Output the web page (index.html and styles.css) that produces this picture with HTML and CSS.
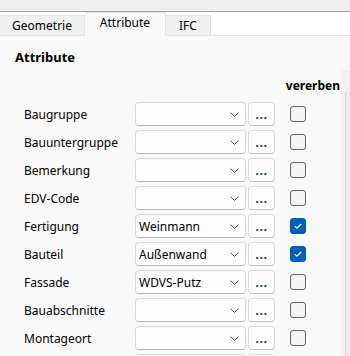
FILE: index.html
```html
<!DOCTYPE html>
<html>
<head>
<meta charset="utf-8">
<link rel="stylesheet" href="styles.css">
</head>
<body>
<div class="topbar"></div>
<div class="tabbar">
  <div class="tab">Geometrie</div>
  <div class="tab active">Attribute</div>
  <div class="tab">IFC</div>
</div>
<div class="content">
  <div class="main">
    <div class="heading">Attribute</div>
    <div class="colhead">vererben</div>
    <div class="rows">
      <div class="row"><span class="label">Baugruppe</span><div class="combo"><span class="val"></span><svg class="chev" width="9" height="5" viewBox="0 0 9 5"><path d="M0.5 0.5 L4.5 4.5 L8.5 0.5" fill="none" stroke="#5a5a5a" stroke-width="1"/></svg></div><div class="btn">...</div><div class="cb"></div></div>
      <div class="row"><span class="label">Bauuntergruppe</span><div class="combo"><span class="val"></span><svg class="chev" width="9" height="5" viewBox="0 0 9 5"><path d="M0.5 0.5 L4.5 4.5 L8.5 0.5" fill="none" stroke="#5a5a5a" stroke-width="1"/></svg></div><div class="btn">...</div><div class="cb"></div></div>
      <div class="row"><span class="label">Bemerkung</span><div class="combo"><span class="val"></span><svg class="chev" width="9" height="5" viewBox="0 0 9 5"><path d="M0.5 0.5 L4.5 4.5 L8.5 0.5" fill="none" stroke="#5a5a5a" stroke-width="1"/></svg></div><div class="btn">...</div><div class="cb"></div></div>
      <div class="row"><span class="label">EDV-Code</span><div class="combo"><span class="val"></span><svg class="chev" width="9" height="5" viewBox="0 0 9 5"><path d="M0.5 0.5 L4.5 4.5 L8.5 0.5" fill="none" stroke="#5a5a5a" stroke-width="1"/></svg></div><div class="btn">...</div><div class="cb"></div></div>
      <div class="row"><span class="label">Fertigung</span><div class="combo"><span class="val">Weinmann</span><svg class="chev" width="9" height="5" viewBox="0 0 9 5"><path d="M0.5 0.5 L4.5 4.5 L8.5 0.5" fill="none" stroke="#5a5a5a" stroke-width="1"/></svg></div><div class="btn">...</div><div class="cb on"><svg width="16" height="16" viewBox="0 0 16 16"><path d="M4.8 8.2 L6.9 10.2 L11.2 6" fill="none" stroke="#fff" stroke-width="1.1"/></svg></div></div>
      <div class="row"><span class="label">Bauteil</span><div class="combo"><span class="val">Außenwand</span><svg class="chev" width="9" height="5" viewBox="0 0 9 5"><path d="M0.5 0.5 L4.5 4.5 L8.5 0.5" fill="none" stroke="#5a5a5a" stroke-width="1"/></svg></div><div class="btn">...</div><div class="cb on"><svg width="16" height="16" viewBox="0 0 16 16"><path d="M4.8 8.2 L6.9 10.2 L11.2 6" fill="none" stroke="#fff" stroke-width="1.1"/></svg></div></div>
      <div class="row"><span class="label">Fassade</span><div class="combo"><span class="val">WDVS-Putz</span><svg class="chev" width="9" height="5" viewBox="0 0 9 5"><path d="M0.5 0.5 L4.5 4.5 L8.5 0.5" fill="none" stroke="#5a5a5a" stroke-width="1"/></svg></div><div class="btn">...</div><div class="cb"></div></div>
      <div class="row"><span class="label">Bauabschnitte</span><div class="combo"><span class="val"></span><svg class="chev" width="9" height="5" viewBox="0 0 9 5"><path d="M0.5 0.5 L4.5 4.5 L8.5 0.5" fill="none" stroke="#5a5a5a" stroke-width="1"/></svg></div><div class="btn">...</div><div class="cb"></div></div>
      <div class="row"><span class="label">Montageort</span><div class="combo"><span class="val"></span><svg class="chev" width="9" height="5" viewBox="0 0 9 5"><path d="M0.5 0.5 L4.5 4.5 L8.5 0.5" fill="none" stroke="#5a5a5a" stroke-width="1"/></svg></div><div class="btn">...</div><div class="cb"></div></div>
      <div class="row"><span class="label"></span><div class="combo"></div><div class="btn"></div><div class="cb"></div></div>
    </div>
  </div>
  <div class="scroll"><div class="thumb"></div></div>
</div>
</body>
</html>
```

FILE: styles.css
```css
html, body {
  margin: 0;
  padding: 0;
}
body {
  width: 350px;
  height: 356px;
  overflow: hidden;
  background: #f9f9f9;
  font-family: "Noto Sans", "Open Sans", sans-serif;
  font-size: 12px;
  color: #000;
}
.topbar {
  height: 11px;
  background: #f0f0f0;
  border-bottom: 1px solid #a0a0a0;
}
.tabbar {
  height: 23px;
  background: #ffffff;
  border-bottom: 1px solid #e3e3e3;
  display: flex;
  align-items: flex-end;
}
.tab {
  box-sizing: border-box;
  height: 21px;
  margin-bottom: -1px;
  background: #f0f0f0;
  border: 1px solid #e3e3e3;
  border-left: none;
  display: flex;
  align-items: center;
  justify-content: center;
  line-height: 1;
}
.tab:nth-child(1) { width: 85px; }
.tab:nth-child(2) { width: 81px; }
.tab:nth-child(3) { width: 45px; }
.tab.active {
  height: 24px;
  background: #f9f9f9;
  border-bottom-color: #f9f9f9;
  padding-bottom: 2px;
}
.content {
  display: flex;
  height: 320px;
  overflow: hidden;
}
.main {
  width: 341px;
  flex: none;
}
.heading {
  font-weight: bold;
  font-size: 13px;
  padding-left: 15px;
  margin-top: 13px;
  line-height: 17px;
  height: 17px;
}
.colhead {
  font-weight: bold;
  text-align: right;
  padding-right: 1px;
  margin-top: 11px;
  line-height: 17px;
  height: 17px;
}
.rows {
  margin-top: 8px;
  display: flex;
  flex-direction: column;
  gap: 4px;
}
.row {
  display: flex;
  align-items: center;
  height: 24px;
  padding-left: 24px;
  flex: none;
}
.label {
  width: 111px;
  flex: none;
}
.combo {
  box-sizing: border-box;
  width: 111px;
  height: 24px;
  background: #fdfdfd;
  border: 1px solid #dadada;
  border-bottom-color: #b5b5b5;
  border-radius: 4px;
  display: flex;
  align-items: center;
  padding-left: 3px;
  padding-right: 6px;
  flex: none;
}
.val {
  flex: 1;
}
.chev {
  display: block;
}
.btn {
  box-sizing: border-box;
  width: 27px;
  height: 24px;
  margin-left: 2px;
  background: #fdfdfd;
  border: 1px solid #dadada;
  border-bottom-color: #c4c4c4;
  border-radius: 4px;
  text-align: center;
  font-weight: bold;
  font-size: 13px;
  letter-spacing: 0.5px;
  color: #1e3f66;
  line-height: 22px;
  flex: none;
}
.cb {
  box-sizing: border-box;
  width: 16px;
  height: 16px;
  margin-left: 15px;
  border: 1px solid #646464;
  border-radius: 3px;
  background: #f3f3f3;
  flex: none;
  position: relative;
}
.cb.on {
  background: #005fb8;
  border-color: #005fb8;
}
.cb svg {
  position: absolute;
  left: -1px;
  top: -1px;
}
.scroll {
  width: 9px;
  margin-top: 34px;
  background: #f2f2f2;
  display: flex;
  padding-top: 22px;
  padding-left: 4px;
}
.thumb {
  flex: 1;
  border-left: 1px solid #d6d6d6;
  background: #ececec;
}
```
